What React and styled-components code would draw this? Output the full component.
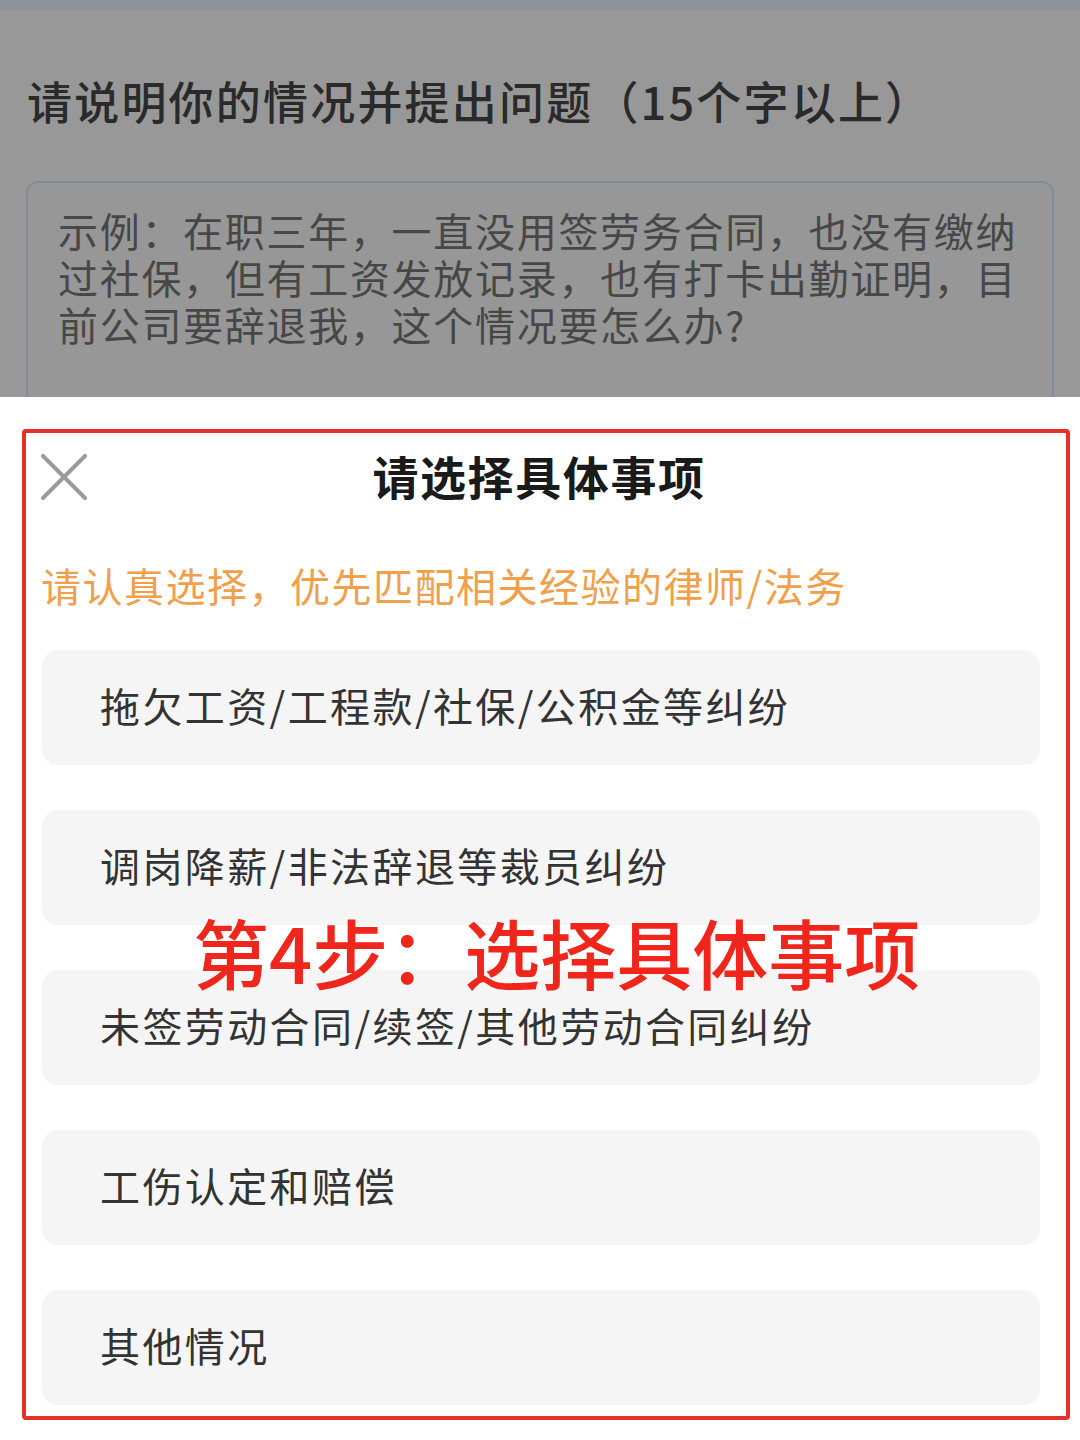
import React from "react";
import styled, { createGlobalStyle } from "styled-components";

const Global = createGlobalStyle`
  html, body { margin: 0; padding: 0; background: #ffffff; }
  body { font-family: "Noto Sans CJK SC", "Noto Sans", sans-serif; }
  * { box-sizing: border-box; }
`;

const Page = styled.div`
  width: 1080px;
  height: 1440px;
  display: flex;
  flex-direction: column;
  overflow: hidden;
  background: #ffffff;
`;

const TopStrip = styled.div`
  height: 10px;
  background: #8c929c;
  flex: none;
`;

const Backdrop = styled.div`
  height: 387px;
  flex: none;
  background: #989898;
  overflow: hidden;
  padding: 0 26px 0 26px;
  display: flex;
  flex-direction: column;
`;

const FormTitle = styled.h1`
  margin: 61px 0 0 1px;
  font-size: 45px;
  line-height: 60px;
  font-weight: 500;
  color: #2a2a2a;
  letter-spacing: 2.2px;
  white-space: nowrap;
`;

const InputBox = styled.div`
  margin-top: 50px;
  width: 1028px;
  height: 320px;
  flex: none;
  border: 2px solid #7f8d9b;
  border-radius: 12px;
  background: #979797;
  padding: 24px 10px 0 30px;
  font-size: 40px;
  line-height: 47px;
  color: #474747;
  letter-spacing: 1.7px;
`;

const Sheet = styled.div`
  position: relative;
  flex: 1;
  background: #ffffff;
  border-radius: 16px 16px 0 0;
  padding: 32px 10px 20px 22px;
`;

const Frame = styled.div`
  border: 4px solid #e8302a;
  border-radius: 4px;
  height: 991px;
  padding: 0 26px 0 16px;
  display: flex;
  flex-direction: column;
`;

const Header = styled.div`
  display: grid;
  grid-template-columns: 1fr auto 1fr;
  align-items: center;
  height: 84px;
  margin-top: 0;
`;

const CloseButton = styled.button`
  width: 48px;
  height: 48px;
  padding: 0;
  border: none;
  background: none;
  display: flex;
  align-items: center;
  justify-content: center;
  justify-self: start;
  margin-left: -2px;
  margin-top: 4px;
`;

const SheetTitle = styled.h2`
  margin: 0 0 0 -4px;
  font-size: 46px;
  font-weight: 700;
  color: #1a1a1a;
  line-height: 60px;
  letter-spacing: 1.6px;
`;

const Hint = styled.p`
  margin: 42px 0 0 -1px;
  font-size: 40px;
  line-height: 52px;
  color: #f0a04a;
  letter-spacing: 1.5px;
  white-space: nowrap;
`;

const OptionList = styled.div`
  margin-top: 39px;
  display: flex;
  flex-direction: column;
  gap: 45px;
`;

const Option = styled.div`
  height: 115px;
  background: #f5f5f5;
  border-radius: 16px;
  display: flex;
  align-items: center;
  padding-left: 58px;
  padding-bottom: 6px;
  font-size: 40px;
  color: #333333;
  letter-spacing: 2.4px;
  white-space: nowrap;
`;

const StepLabel = styled.div`
  position: absolute;
  left: 193px;
  top: 512px;
  font-size: 76px;
  line-height: 84px;
  color: #f0261c;
  font-weight: 500;
  white-space: nowrap;
  pointer-events: none;
`;

const options = [
  "拖欠工资/工程款/社保/公积金等纠纷",
  "调岗降薪/非法辞退等裁员纠纷",
  "未签劳动合同/续签/其他劳动合同纠纷",
  "工伤认定和赔偿",
  "其他情况",
];

export default function App() {
  return (
    <>
      <Global />
      <Page>
        <TopStrip />
        <Backdrop>
          <FormTitle>请说明你的情况并提出问题（15个字以上）</FormTitle>
          <InputBox>
            示例：在职三年，一直没用签劳务合同，也没有缴纳过社保，但有工资发放记录，也有打卡出勤证明，目前公司要辞退我，这个情况要怎么办?
          </InputBox>
        </Backdrop>
        <Sheet>
          <Frame>
            <Header>
              <CloseButton aria-label="关闭">
                <svg width="46" height="46" viewBox="0 0 46 46">
                  <path
                    d="M2 2 L44 44 M44 2 L2 44"
                    stroke="#9a9a9a"
                    strokeWidth="4"
                    strokeLinecap="round"
                    fill="none"
                  />
                </svg>
              </CloseButton>
              <SheetTitle>请选择具体事项</SheetTitle>
              <div />
            </Header>
            <Hint>请认真选择，优先匹配相关经验的律师/法务</Hint>
            <OptionList>
              {options.map((o) => (
                <Option key={o}>{o}</Option>
              ))}
            </OptionList>
          </Frame>
          <StepLabel>第4步：选择具体事项</StepLabel>
        </Sheet>
      </Page>
    </>
  );
}
